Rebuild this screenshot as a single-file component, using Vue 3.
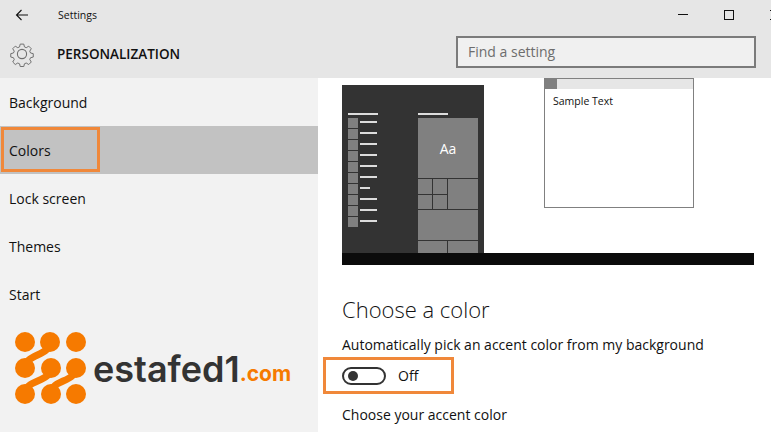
<script setup>
const nav = ['Background', 'Colors', 'Lock screen', 'Themes', 'Start']
const rows = [17, 17, 17, 17, 17, 17, 10, 17, 17, 17]
</script>

<template>
  <div class="app">
    <header class="head">
      <div class="titlebar">
        <svg class="back" width="14" height="12" viewBox="0 0 14 12"><path d="M13 6H1.5M6.5 1 1.5 6l5 5" fill="none" stroke="#111" stroke-width="1.1"/></svg>
        <span class="title">Settings</span>
        <span class="min"></span>
        <span class="max"></span>
        <svg class="close" width="10" height="10" viewBox="0 0 10 10"><path d="M0 0l10 10M10 0 0 10" stroke="#111"/></svg>
      </div>
      <div class="subbar">
        <svg class="gear" width="26" height="26" viewBox="0 0 26 26" fill="none" stroke="#6f6f6f" stroke-width="1.1">
          <circle cx="13" cy="13" r="4.6"/>
          <path d="M11 2h4l.7 3.1 2 .9 2.8-1.7 2.8 2.8-1.7 2.8.9 2 3 .7v3.8l-3 .7-.9 2 1.7 2.8-2.8 2.8-2.8-1.7-2 .9-.7 3h-4l-.7-3-2-.9-2.8 1.7-2.8-2.8 1.7-2.8-.9-2-3-.7v-3.8l3-.7.9-2-1.7-2.8 2.8-2.8L8.3 6l2-.9z" transform="translate(1.3 1.3) scale(.9)"/>
        </svg>
        <span class="section">PERSONALIZATION</span>
        <div class="search">Find a setting</div>
      </div>
    </header>

    <div class="body">
      <aside class="side">
        <nav class="nav">
          <div v-for="n in nav" :key="n" class="item" :class="{ active: n === 'Colors' }">
            <span>{{ n }}</span>
          </div>
        </nav>
        <div class="callout"></div>
        <div class="logo">
          <svg width="74" height="74" viewBox="0 0 74 74" fill="#f67a00">
            <g stroke="#f67a00" stroke-width="7" fill="none">
              <path d="M36 10C36 24 11 22 11 36"/>
              <path d="M37 36C37 50 11 48 11 61"/>
              <path d="M62 36C62 50 37 48 37 61"/>
            </g>
            <circle cx="11" cy="10" r="10"/><circle cx="36" cy="10" r="10"/><circle cx="62" cy="10" r="10"/>
            <circle cx="11" cy="36" r="10"/><circle cx="37" cy="36" r="10"/><circle cx="62" cy="36" r="10"/>
            <circle cx="11" cy="62" r="10"/><circle cx="37" cy="62" r="10"/><circle cx="62" cy="62" r="10"/>
          </svg>
          <span class="brand">estafed1</span><span class="tld">.com</span>
        </div>
      </aside>

      <main class="main">
        <div class="preview">
          <div class="desk">
            <div class="list">
              <div class="cap"></div>
              <div v-for="(w, i) in rows" :key="i" class="row">
                <span class="sq"></span>
                <span class="ln" :style="{ width: w + 'px' }"></span>
              </div>
            </div>
            <div class="tiles">
              <div class="cap"></div>
              <div class="grid">
                <div class="aa">Aa</div>
                <div></div><div></div>
                <div class="tall"></div>
                <div></div><div></div>
                <div class="wide"></div>
                <div class="dbl"></div><div></div>
              </div>
            </div>
          </div>
          <div class="sample">
            <div class="wbar"><span></span></div>
            <div class="stext">Sample Text</div>
          </div>
        </div>
        <div class="taskbar"></div>
        <h2 class="h">Choose a color</h2>
        <div class="label">Automatically pick an accent color from my background</div>
        <div class="toggleBox">
          <span class="toggle"><i></i></span>
          <span class="off">Off</span>
        </div>
        <div class="label next">Choose your accent color</div>
      </main>
    </div>
  </div>
</template>

<style scoped>
.app {
  width: 771px;
  height: 432px;
  overflow: hidden;
  display: flex;
  flex-direction: column;
  font-family: "Open Sans", "Noto Sans", sans-serif;
  color: #111;
  background: #fff;
}
.head {
  height: 78px;
  background: #e6e6e6;
  flex: none;
  overflow: hidden;
}
.titlebar {
  height: 29px;
  display: flex;
  align-items: center;
  padding-left: 15px;
}
.back { flex: none; }
.title {
  margin-left: 29px;
  font-size: 10.5px;
  width: 620px;
  flex: none;
}
.min {
  width: 10px;
  height: 1px;
  background: #111;
  flex: none;
  margin-left: -0px;
}
.max {
  width: 10px;
  height: 10px;
  border: 1px solid #111;
  box-sizing: border-box;
  margin-left: 36px;
  flex: none;
}
.close { margin-left: 36px; flex: none; }
.subbar {
  height: 49px;
  display: flex;
  align-items: center;
  padding-left: 9px;
}
.gear { flex: none; }
.section {
  margin-left: 22px;
  width: 399px;
  flex: none;
  font-size: 13.5px;
  font-weight: 600;
}
.search {
  flex: none;
  width: 300px;
  height: 32px;
  box-sizing: border-box;
  border: 2px solid #7b7b7b;
  background: #f0f0f0;
  color: #6d6d6d;
  font-size: 14px;
  line-height: 28px;
  padding-left: 10px;
  margin-top: -3px;
}
.body { flex: 1; display: flex; min-height: 0; }
.side {
  width: 318px;
  flex: none;
  background: #f2f2f2;
  position: relative;
}
.item {
  height: 48px;
  display: flex;
  align-items: center;
  padding-left: 9px;
  font-size: 14px;
}
.active { background: #c2c2c2; }
.callout {
  position: absolute;
  left: 1px;
  top: 49px;
  width: 99px;
  height: 45px;
  box-sizing: border-box;
  border: 3px solid #f0883a;
}
.logo {
  position: absolute;
  left: 14px;
  top: 254px;
  display: flex;
  align-items: center;
}
.brand {
  margin-left: 5px;
  font-family: Inter, sans-serif;
  font-size: 36px;
  font-weight: 600;
  color: #333;
  line-height: 1;
}
.tld {
  font-family: Inter, sans-serif;
  font-size: 21px;
  font-weight: 700;
  color: #f67a00;
  align-self: center;
  margin-top: 9px;
}
.main { flex: 1; padding-left: 24px; min-width: 0; }
.preview { display: flex; align-items: flex-start; height: 175px; }
.desk {
  margin-top: 7px;
  width: 142px;
  height: 168px;
  background: #333;
  box-sizing: border-box;
  padding: 28px 0 0 6px;
  display: flex;
  gap: 40px;
  overflow: hidden;
  flex: none;
}
.cap { width: 30px; height: 2px; background: #ddd; margin-bottom: 3px; }
.list { width: 30px; flex: none; }
.row { display: flex; align-items: center; height: 10px; margin-bottom: 1px; gap: 2px; }
.sq { width: 10px; height: 10px; background: #808080; flex: none; }
.ln { height: 2px; background: #ddd; margin-top: -2px; }
.tiles { width: 60px; flex: none; }
.grid {
  display: grid;
  grid-template-columns: 14px 14px 30px;
  grid-template-rows: 60px 15px 14px 30px 12px;
  gap: 1px;
}
.grid > div { background: #808080; }
.aa {
  grid-column: 1 / span 3;
  color: #fff;
  font-size: 14px;
  display: flex;
  align-items: center;
  justify-content: center;
}
.tall { grid-row: 2 / span 2; grid-column: 3; }
.wide { grid-column: 1 / span 3; }
.dbl { grid-column: 1 / span 2; }
.sample {
  margin-left: 60px;
  width: 150px;
  height: 130px;
  box-sizing: border-box;
  border: 1px solid #808080;
  border-top: 1px solid #808080;
  flex: none;
}
.wbar { height: 10px; background: #e6e6e6; }
.wbar span { display: block; width: 12px; height: 10px; background: #808080; }
.stext { font-size: 10.5px; padding: 5px 8px; }
.taskbar { width: 412px; height: 12px; background: #0b0b0b; margin-left: 0; margin-top: -0px; }
.h {
  margin: 28px 0 0;
  font-size: 22px;
  font-weight: 300;
  line-height: 32px;
}
.label { font-size: 14px; line-height: 20px; margin-top: 10px; }
.toggleBox {
  margin: 2px 0 0 -19px;
  width: 131px;
  height: 37px;
  box-sizing: border-box;
  border: 3px solid #f0883a;
  display: flex;
  align-items: center;
  padding-left: 16px;
}
.toggle {
  width: 44px;
  height: 18px;
  box-sizing: border-box;
  border: 2px solid #333;
  border-radius: 9px;
  display: flex;
  align-items: center;
  padding-left: 4px;
}
.toggle i { width: 10px; height: 10px; border-radius: 50%; background: #333; }
.off { margin-left: 12px; font-size: 14px; }
.next { margin-top: 11px; }
</style>
